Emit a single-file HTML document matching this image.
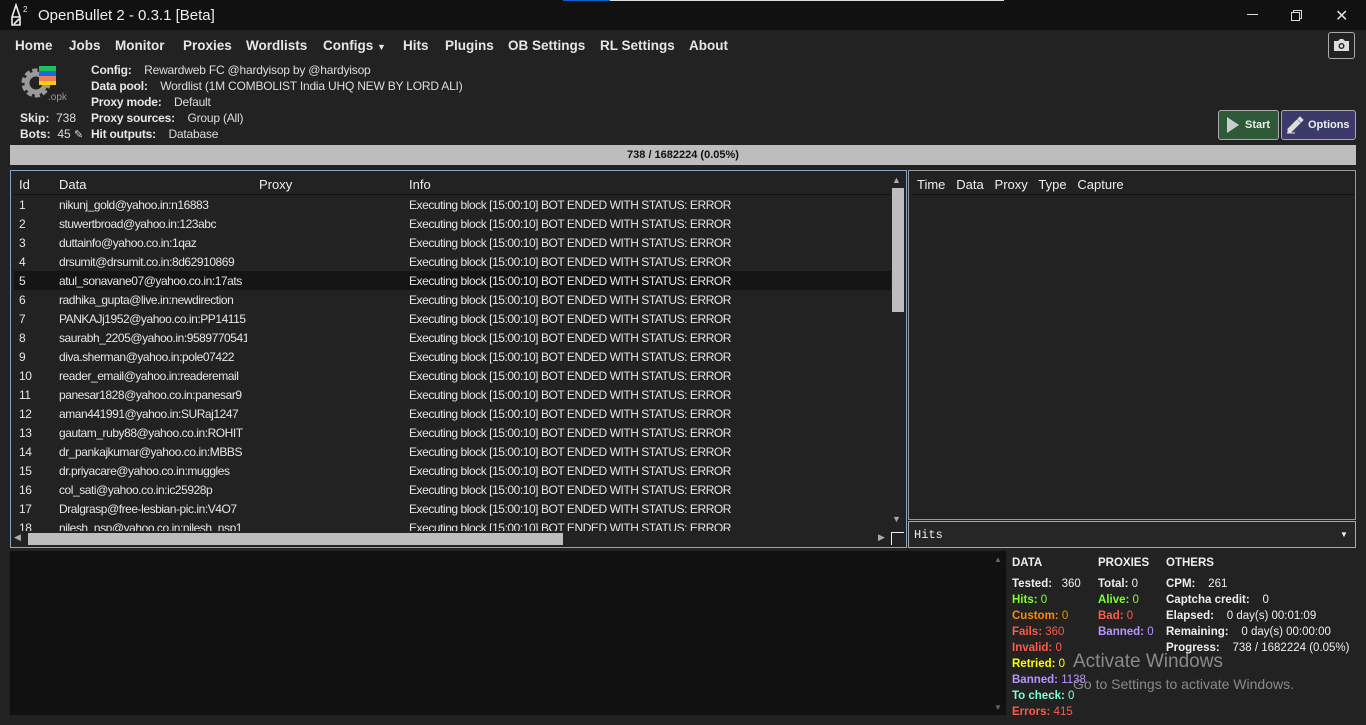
<!DOCTYPE html>
<html><head><meta charset="utf-8"><style>
*{margin:0;padding:0;box-sizing:border-box}
body{width:1366px;height:725px;background:#222;font-family:"Liberation Sans",sans-serif;color:#ddd;position:relative;overflow:hidden;font-size:12px}
.a{position:absolute;white-space:nowrap}
.nav{font-weight:bold;font-size:13.5px;color:#e6e6e6;top:38px}
.lbl{font-weight:bold;color:#e6e6e6}
.st{font-size:11.5px;font-weight:bold}
.st span{font-weight:normal}
#rws{letter-spacing:-0.45px}
</style></head><body>
<div class="a" style="left:0;top:0;width:1366px;height:30px;background:#111"></div>
<div class="a" style="left:563px;top:0;width:47px;height:1px;background:#0a64c8"></div>
<div class="a" style="left:610px;top:0;width:394px;height:1px;background:#ddd"></div>
<svg class="a" style="left:6px;top:3px" width="24" height="24" viewBox="0 0 24 24" fill="none" stroke="#eee" stroke-width="1.6"><path d="M10 2 L6 14 L6 22 L14 22 L14 14 Z M6 14 L14 14 M8 21 L13 16"/><text x="17" y="9" fill="#eee" stroke="none" font-size="8" font-family="Liberation Sans">2</text></svg>
<div class="a" style="left:38px;top:7px;font-size:15px;color:#eee">OpenBullet 2 - 0.3.1 [Beta]</div>
<div class="a" style="left:1247px;top:14px;width:11px;height:1px;background:#ddd"></div>
<div class="a" style="left:1293px;top:10px;width:9px;height:9px;border:1px solid #ddd"></div>
<div class="a" style="left:1291px;top:12px;width:9px;height:9px;border:1px solid #ddd;background:#111"></div>
<div class="a" style="left:1335px;top:6px;font-size:16px;color:#ddd">✕</div>

<div class="a nav" style="left:15px">Home</div>
<div class="a nav" style="left:69px">Jobs</div>
<div class="a nav" style="left:115px">Monitor</div>
<div class="a nav" style="left:183px">Proxies</div>
<div class="a nav" style="left:246px">Wordlists</div>
<div class="a nav" style="left:323px">Configs <span style="font-size:9px">▼</span></div>
<div class="a nav" style="left:403px">Hits</div>
<div class="a nav" style="left:445px">Plugins</div>
<div class="a nav" style="left:508px">OB Settings</div>
<div class="a nav" style="left:600px">RL Settings</div>
<div class="a nav" style="left:689px">About</div>
<div class="a" style="left:1328px;top:32px;width:27px;height:27px;border:1px solid #aaa;border-radius:3px"></div>
<svg class="a" style="left:1333px;top:38px" width="17" height="14" viewBox="0 0 17 14"><path d="M1 3h4l2-2h3l2 2h4v10H1z" fill="#ddd"/><circle cx="8.5" cy="8" r="3" fill="#222"/><circle cx="8.5" cy="8" r="1.6" fill="#ddd"/></svg>

<svg class="a" style="left:18px;top:64px" width="52" height="40" viewBox="0 0 52 40"><circle cx="18" cy="19" r="11" fill="none" stroke="#9a9a9a" stroke-width="7" stroke-dasharray="4.5 2.4"/><circle cx="18" cy="19" r="9" fill="none" stroke="#9a9a9a" stroke-width="5"/><rect x="21" y="2" width="17" height="5" fill="#21c05a"/><rect x="21" y="7" width="17" height="5" fill="#1d6bd8"/><rect x="21" y="12" width="17" height="5" fill="#f07c5c"/><rect x="21" y="17" width="17" height="4" fill="#ffd000"/><text x="30" y="36" fill="#9a9a9a" font-size="10" font-family="Liberation Sans">.opk</text></svg>
<div class="a" style="left:91px;top:62px;line-height:16px;font-size:12px;letter-spacing:-0.2px">
<div><b class="lbl">Config:</b>&nbsp;&nbsp;&nbsp; Rewardweb FC @hardyisop by @hardyisop</div>
<div><b class="lbl">Data pool:</b>&nbsp;&nbsp;&nbsp; Wordlist (1M COMBOLIST India UHQ NEW BY LORD ALI)</div>
<div><b class="lbl">Proxy mode:</b>&nbsp;&nbsp;&nbsp; Default</div>
<div><b class="lbl">Proxy sources:</b>&nbsp;&nbsp;&nbsp; Group (All)</div>
<div><b class="lbl">Hit outputs:</b>&nbsp;&nbsp;&nbsp; Database</div>
</div>
<div class="a" style="left:20px;top:110px;line-height:16px">
<div><b class="lbl">Skip:</b>&nbsp; 738</div>
<div><b class="lbl">Bots:</b>&nbsp; 45 <span style="font-size:11px">✎</span></div>
</div>
<div class="a" style="left:1218px;top:110px;width:61px;height:30px;background:#2e5a3a;border:1px solid #aaa;border-radius:3px"></div>
<svg class="a" style="left:1226px;top:116px" width="14" height="18"><path d="M1 1L13 9L1 17z" fill="#ccc"/></svg>
<div class="a" style="left:1245px;top:119px;font-size:11px;font-weight:bold;color:#eee">Start</div>
<div class="a" style="left:1281px;top:110px;width:75px;height:30px;background:#3c3a6a;border:1px solid #aaa;border-radius:3px"></div>
<svg class="a" style="left:1286px;top:116px" width="18" height="18" viewBox="0 0 18 18"><path d="M2 13L11 4L14 7L5 16H2z M12 3L14 1L17 4L15 6z M1 17H9" fill="#ddd" stroke="#ddd" stroke-width="1"/></svg>
<div class="a" style="left:1308px;top:119px;font-size:11px;font-weight:bold;color:#eee">Options</div>

<div class="a" style="left:10px;top:145px;width:1346px;height:20px;background:#bdbdbd;color:#111;font-weight:bold;font-size:11px;text-align:center;line-height:20px">738 / 1682224 (0.05%)</div>

<div class="a" style="left:10px;top:170px;width:897px;height:378px;border:1px solid #8aa6c0"></div>
<div class="a" style="left:19px;top:177px;font-size:13px;color:#eee">Id</div>
<div class="a" style="left:59px;top:177px;font-size:13px;color:#eee">Data</div>
<div class="a" style="left:259px;top:177px;font-size:13px;color:#eee">Proxy</div>
<div class="a" style="left:409px;top:177px;font-size:13px;color:#eee">Info</div>
<div class="a" style="left:14px;top:194px;width:876px;height:1px;background:#111"></div>
<div class="a" style="left:14px;top:271px;width:877px;height:19px;background:#151515"></div>
<div class="a" style="left:892px;top:188px;width:12px;height:124px;background:#bdbdbd"></div>
<div class="a" style="left:892px;top:175px;font-size:9px;color:#aaa">▲</div>
<div class="a" style="left:892px;top:514px;font-size:9px;color:#aaa">▼</div>
<div class="a" style="left:28px;top:533px;width:535px;height:12px;background:#bdbdbd"></div>
<div class="a" style="left:14px;top:532px;font-size:9px;color:#aaa">◀</div>
<div class="a" style="left:878px;top:532px;font-size:9px;color:#aaa">▶</div>
<div class="a" style="left:891px;top:532px;width:13px;height:13px;border-left:1px solid #eee;border-top:1px solid #eee"></div>

<div class="a" style="left:908px;top:170px;width:448px;height:350px;border:1px solid #999"></div>
<div class="a" style="left:917px;top:177px;font-size:13px;color:#eee">Time&nbsp;&nbsp; Data&nbsp;&nbsp; Proxy&nbsp;&nbsp; Type&nbsp;&nbsp; Capture</div>
<div class="a" style="left:912px;top:194px;width:442px;height:1px;background:#111"></div>
<div class="a" style="left:908px;top:521px;width:448px;height:27px;border:1px solid #aaa;background:#262626"></div>
<div class="a" style="left:914px;top:528px;font-family:'Liberation Mono',monospace;font-size:12px;color:#eee">Hits</div>
<div class="a" style="left:1340px;top:530px;font-size:8px;color:#eee">▼</div>

<div class="a" style="left:10px;top:551px;width:996px;height:164px;background:#111"></div>
<div class="a" style="left:994px;top:555px;font-size:8px;color:#666">▲</div>
<div class="a" style="left:994px;top:703px;font-size:8px;color:#666">▼</div>

<div class="a st" style="left:1012px;top:555px;line-height:16px;color:#eee">
<div>DATA</div><div style="height:5px"></div>
<div>Tested: <span>&nbsp;&nbsp;360</span></div>
<div style="color:#7dff2d">Hits: <span>0</span></div>
<div style="color:#ff8a00">Custom: <span>0</span></div>
<div style="color:#ff5a4a">Fails: <span>360</span></div>
<div style="color:#ff5a4a">Invalid: <span>0</span></div>
<div style="color:#ffff00">Retried: <span>0</span></div>
<div style="color:#b894ff">Banned: <span>1138</span></div>
<div style="color:#7fffd4">To check: <span>0</span></div>
<div style="color:#ff5a4a">Errors: <span>415</span></div>
</div>
<div class="a st" style="left:1098px;top:555px;line-height:16px;color:#eee">
<div>PROXIES</div><div style="height:5px"></div>
<div>Total: <span>0</span></div>
<div style="color:#7dff2d">Alive: <span>0</span></div>
<div style="color:#ff5a4a">Bad: <span>0</span></div>
<div style="color:#b894ff">Banned: <span>0</span></div>
</div>
<div class="a st" style="left:1166px;top:555px;line-height:16px;color:#eee">
<div>OTHERS</div><div style="height:5px"></div>
<div>CPM: <span>&nbsp;&nbsp;&nbsp;261</span></div>
<div>Captcha credit: <span>&nbsp;&nbsp;&nbsp;0</span></div>
<div>Elapsed: <span>&nbsp;&nbsp;&nbsp;0 day(s) 00:01:09</span></div>
<div>Remaining: <span>&nbsp;&nbsp;&nbsp;0 day(s) 00:00:00</span></div>
<div>Progress: <span>&nbsp;&nbsp;&nbsp;738 / 1682224 (0.05%)</span></div>
</div>
<div class="a" style="left:1073px;top:651px;font-size:19px;color:#8a8a8a">Activate Windows</div>
<div class="a" style="left:1073px;top:676px;font-size:14px;color:#8a8a8a">Go to Settings to activate Windows.</div>

<div id="rws" class="a" style="left:0;top:196px;width:900px;font-size:12px;color:#e6e6e6">
<div style="position:relative;height:19px"><span class="a" style="left:19px;top:2px">1</span><span class="a" style="left:59px;top:2px;width:188px;overflow:hidden">nikunj_gold@yahoo.in:n16883</span><span class="a" style="left:409px;top:2px">Executing block [15:00:10] BOT ENDED WITH STATUS: ERROR</span></div>
<div style="position:relative;height:19px"><span class="a" style="left:19px;top:2px">2</span><span class="a" style="left:59px;top:2px;width:188px;overflow:hidden">stuwertbroad@yahoo.in:123abc</span><span class="a" style="left:409px;top:2px">Executing block [15:00:10] BOT ENDED WITH STATUS: ERROR</span></div>
<div style="position:relative;height:19px"><span class="a" style="left:19px;top:2px">3</span><span class="a" style="left:59px;top:2px;width:188px;overflow:hidden">duttainfo@yahoo.co.in:1qaz</span><span class="a" style="left:409px;top:2px">Executing block [15:00:10] BOT ENDED WITH STATUS: ERROR</span></div>
<div style="position:relative;height:19px"><span class="a" style="left:19px;top:2px">4</span><span class="a" style="left:59px;top:2px;width:188px;overflow:hidden">drsumit@drsumit.co.in:8d62910869</span><span class="a" style="left:409px;top:2px">Executing block [15:00:10] BOT ENDED WITH STATUS: ERROR</span></div>
<div style="position:relative;height:19px"><span class="a" style="left:19px;top:2px">5</span><span class="a" style="left:59px;top:2px;width:188px;overflow:hidden">atul_sonavane07@yahoo.co.in:17ats</span><span class="a" style="left:409px;top:2px">Executing block [15:00:10] BOT ENDED WITH STATUS: ERROR</span></div>
<div style="position:relative;height:19px"><span class="a" style="left:19px;top:2px">6</span><span class="a" style="left:59px;top:2px;width:188px;overflow:hidden">radhika_gupta@live.in:newdirection</span><span class="a" style="left:409px;top:2px">Executing block [15:00:10] BOT ENDED WITH STATUS: ERROR</span></div>
<div style="position:relative;height:19px"><span class="a" style="left:19px;top:2px">7</span><span class="a" style="left:59px;top:2px;width:188px;overflow:hidden">PANKAJj1952@yahoo.co.in:PP14115</span><span class="a" style="left:409px;top:2px">Executing block [15:00:10] BOT ENDED WITH STATUS: ERROR</span></div>
<div style="position:relative;height:19px"><span class="a" style="left:19px;top:2px">8</span><span class="a" style="left:59px;top:2px;width:188px;overflow:hidden">saurabh_2205@yahoo.in:9589770541</span><span class="a" style="left:409px;top:2px">Executing block [15:00:10] BOT ENDED WITH STATUS: ERROR</span></div>
<div style="position:relative;height:19px"><span class="a" style="left:19px;top:2px">9</span><span class="a" style="left:59px;top:2px;width:188px;overflow:hidden">diva.sherman@yahoo.in:pole07422</span><span class="a" style="left:409px;top:2px">Executing block [15:00:10] BOT ENDED WITH STATUS: ERROR</span></div>
<div style="position:relative;height:19px"><span class="a" style="left:19px;top:2px">10</span><span class="a" style="left:59px;top:2px;width:188px;overflow:hidden">reader_email@yahoo.in:readeremail</span><span class="a" style="left:409px;top:2px">Executing block [15:00:10] BOT ENDED WITH STATUS: ERROR</span></div>
<div style="position:relative;height:19px"><span class="a" style="left:19px;top:2px">11</span><span class="a" style="left:59px;top:2px;width:188px;overflow:hidden">panesar1828@yahoo.co.in:panesar9</span><span class="a" style="left:409px;top:2px">Executing block [15:00:10] BOT ENDED WITH STATUS: ERROR</span></div>
<div style="position:relative;height:19px"><span class="a" style="left:19px;top:2px">12</span><span class="a" style="left:59px;top:2px;width:188px;overflow:hidden">aman441991@yahoo.in:SURaj1247</span><span class="a" style="left:409px;top:2px">Executing block [15:00:10] BOT ENDED WITH STATUS: ERROR</span></div>
<div style="position:relative;height:19px"><span class="a" style="left:19px;top:2px">13</span><span class="a" style="left:59px;top:2px;width:188px;overflow:hidden">gautam_ruby88@yahoo.co.in:ROHIT</span><span class="a" style="left:409px;top:2px">Executing block [15:00:10] BOT ENDED WITH STATUS: ERROR</span></div>
<div style="position:relative;height:19px"><span class="a" style="left:19px;top:2px">14</span><span class="a" style="left:59px;top:2px;width:188px;overflow:hidden">dr_pankajkumar@yahoo.co.in:MBBS</span><span class="a" style="left:409px;top:2px">Executing block [15:00:10] BOT ENDED WITH STATUS: ERROR</span></div>
<div style="position:relative;height:19px"><span class="a" style="left:19px;top:2px">15</span><span class="a" style="left:59px;top:2px;width:188px;overflow:hidden">dr.priyacare@yahoo.co.in:muggles</span><span class="a" style="left:409px;top:2px">Executing block [15:00:10] BOT ENDED WITH STATUS: ERROR</span></div>
<div style="position:relative;height:19px"><span class="a" style="left:19px;top:2px">16</span><span class="a" style="left:59px;top:2px;width:188px;overflow:hidden">col_sati@yahoo.co.in:ic25928p</span><span class="a" style="left:409px;top:2px">Executing block [15:00:10] BOT ENDED WITH STATUS: ERROR</span></div>
<div style="position:relative;height:19px"><span class="a" style="left:19px;top:2px">17</span><span class="a" style="left:59px;top:2px;width:188px;overflow:hidden">Dralgrasp@free-lesbian-pic.in:V4O7</span><span class="a" style="left:409px;top:2px">Executing block [15:00:10] BOT ENDED WITH STATUS: ERROR</span></div>
<div style="position:relative;height:12px;overflow:hidden"><span class="a" style="left:19px;top:2px">18</span><span class="a" style="left:59px;top:2px;width:188px;overflow:hidden">nilesh_nsp@yahoo.co.in:nilesh_nsp1</span><span class="a" style="left:409px;top:2px">Executing block [15:00:10] BOT ENDED WITH STATUS: ERROR</span></div>
</div>
</body></html>
